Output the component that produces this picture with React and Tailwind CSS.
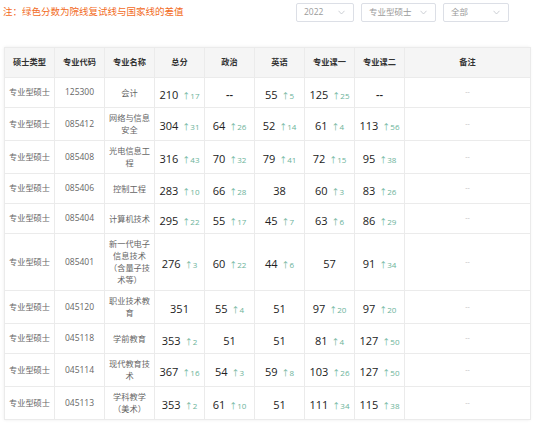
import React from "react";

const rows = [
    ["125300", "会计", [210, 17], null, [55, 5], [125, 25], null],
    ["085412", "网络与信息安全", [304, 31], [64, 26], [52, 14], [61, 4], [113, 56]],
    ["085408", "光电信息工程", [316, 43], [70, 32], [79, 41], [72, 15], [95, 38]],
    ["085406", "控制工程", [283, 10], [66, 28], [38], [60, 3], [83, 26]],
    ["085404", "计算机技术", [295, 22], [55, 17], [45, 7], [63, 6], [86, 29]],
    ["085401", "新一代电子信息技术（含量子技术等）", [276, 3], [60, 22], [44, 6], [57], [91, 34]],
    ["045120", "职业技术教育", [351], [55, 4], [51], [97, 20], [97, 20]],
    ["045118", "学前教育", [353, 2], [51], [51], [81, 4], [127, 50]],
    ["045114", "现代教育技术", [367, 16], [54, 3], [59, 8], [103, 26], [127, 50]],
    ["045113", "学科教学（美术）", [353, 2], [61, 10], [51], [111, 34], [115, 38]],
];

const heads = ["硕士类型", "专业代码", "专业名称", "总分", "政治", "英语", "专业课一", "专业课二", "备注"];

function Select({ label, width }) {
    return (
        <div
            className={`flex items-center justify-between h-[19px] border border-[#dcdfe6] rounded-[2px] bg-white pl-[7px] pr-[8px] ${width}`}
        >
            <span className="text-[8.5px] text-[#9a9a9a]">{label}</span>
            <svg width="7" height="5" viewBox="0 0 7 5" fill="none" stroke="#c0c4cc" strokeWidth="0.8">
                <polyline points="0.5,0.8 3.5,4 6.5,0.8" />
            </svg>
        </div>
    );
}

function Score({ v }) {
    if (!v) return <span className="text-[11px] text-[#222] font-semibold">--</span>;
    return (
        <span className="inline-flex items-baseline gap-[4px]">
            <span className="text-[11px] text-[#222]">{v[0]}</span>
            {v[1] !== undefined && (
                <span className="text-[8px] text-[#6bb39a]">↑{v[1]}</span>
            )}
        </span>
    );
}

export default function App() {
    const cell = "border border-[#ebebeb] text-center align-middle";
    return (
        <div
            className="w-[535px] h-[426px] bg-white overflow-hidden"
            style={{ fontFamily: '"Open Sans", "Noto Sans CJK SC", sans-serif' }}
        >
            <div className="flex items-center justify-between pt-[3px] pl-[3px] pr-[26px] h-[22px]">
                <div className="text-[9.5px] text-[#f26b1d]">注：绿色分数为院线复试线与国家线的差值</div>
                <div className="flex items-center">
                    <Select label="2022" width="w-[58px]" />
                    <div className="ml-[7px]">
                        <Select label="专业型硕士" width="w-[75px]" />
                    </div>
                    <div className="ml-[7px]">
                        <Select label="全部" width="w-[66px]" />
                    </div>
                </div>
            </div>
            <div className="ml-[4px] mt-[25px] w-[526px] shadow-[0_0_3px_rgba(0,0,0,0.08)]">
                <table className="w-[526px] table-fixed border-collapse">
                    <colgroup>
                        {heads.map((h, i) => (
                            <col key={h} className={i === 8 ? "w-[126px]" : "w-[50px]"} />
                        ))}
                    </colgroup>
                    <thead>
                        <tr className="h-[30px] bg-[#f5f5f5]">
                            {heads.map((h) => (
                                <th key={h} className={`${cell} text-[8.2px] font-bold text-[#333]`}>
                                    {h}
                                </th>
                            ))}
                        </tr>
                    </thead>
                    <tbody>
                        {rows.map((r) => (
                            <tr key={r[0]} className="h-[30px]">
                                <td className={`${cell} text-[8.2px] text-[#666]`}>专业型硕士</td>
                                <td className={`${cell} text-[8.5px] text-[#666]`}>{r[0]}</td>
                                <td className={`${cell} px-[4px] py-[4px] text-[8.2px] leading-[12px] text-[#666]`}>
                                    {r[1]}
                                </td>
                                {r.slice(2).map((v, i) => (
                                    <td key={i} className={cell}>
                                        <Score v={v} />
                                    </td>
                                ))}
                                <td className={`${cell} text-[7px] text-[#bbb]`}>--</td>
                            </tr>
                        ))}
                    </tbody>
                </table>
            </div>
        </div>
    );
}
